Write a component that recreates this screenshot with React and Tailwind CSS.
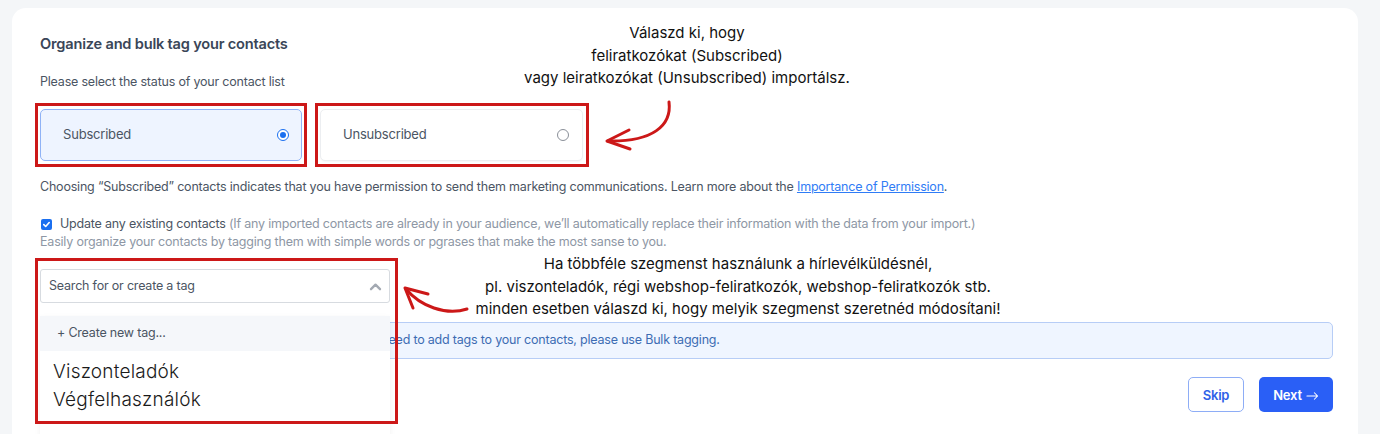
import React from "react";

const ui = { fontFamily: "Inter, 'Noto Sans', sans-serif" };

function Radio({ checked }) {
  if (checked) {
    return (
      <span className="flex h-[12px] w-[12px] items-center justify-center rounded-full border-[1.5px] border-[#1a6ff0] bg-white">
        <span className="h-[6px] w-[6px] rounded-full bg-[#1a6ff0]" />
      </span>
    );
  }
  return <span className="h-[12px] w-[12px] rounded-full border border-[#8a8f98] bg-white" />;
}

export default function App() {
  return (
    <div className="relative h-[434px] w-[1380px] overflow-hidden bg-[#f4f6f8]" style={ui}>
      <div className="ml-3 mt-2 h-[480px] w-[1346px] rounded-t-[14px] bg-white pl-7 pr-[25px] pt-[26px] tracking-[-0.2px]">
        <h1 className="text-[14.6px] font-semibold leading-5 text-[#3a4658]">Organize and bulk tag your contacts</h1>
        <p className="mt-[19px] text-[12.5px] leading-[18px] text-[#4b5563]">Please select the status of your contact list</p>

        <div className="mt-[18px] flex gap-[18px]">
          <div className="flex h-[52px] w-[262px] items-center justify-between rounded-[5px] border border-[#8fb2f6] bg-[#eef4ff] pl-[22px] pr-[12px]">
            <span className="text-[13px] text-[#4b5563]">Subscribed</span>
            <Radio checked />
          </div>
          <div className="flex h-[52px] w-[263px] items-center justify-between rounded-[5px] border border-[#eceef1] bg-white pl-[22px] pr-[13px] shadow-[0_1px_2px_rgba(0,0,0,0.04)]">
            <span className="text-[13px] text-[#4b5563]">Unsubscribed</span>
            <Radio />
          </div>
        </div>

        <p className="mt-[17px] text-[12.5px] leading-[18px] text-[#4b5563]">
          Choosing “Subscribed” contacts indicates that you have permission to send them marketing communications. Learn more about the{" "}
          <span className="text-[#2f7cf6] underline">Importance of Permission</span>.
        </p>

        <div className="mt-[19px] flex items-center gap-[8px] text-[12.5px] leading-[18px]">
          <span className="ml-[1px] flex h-[11px] w-[11px] items-center justify-center rounded-[2px] bg-[#1a6ff0]">
            <svg viewBox="0 0 10 10" className="h-[9px] w-[9px]" fill="none" stroke="white" strokeWidth="1.8" strokeLinecap="round" strokeLinejoin="round">
              <path d="M2 5.2 L4.1 7.2 L8 2.8" />
            </svg>
          </span>
          <span className="text-[#4b5563]">
            Update any existing contacts{" "}
            <span className="text-[#8e97a5]">(If any imported contacts are already in your audience, we’ll automatically replace their information with the data from your import.)</span>
          </span>
        </div>
        <p className="text-[12.5px] leading-[18px] text-[#8e97a5]">Easily organize your contacts by tagging them with simple words or pgrases that make the most sanse to you.</p>

        <div className="relative mt-[18px] w-[350px]">
          <div className="flex h-[34px] items-center justify-between rounded-[3px] border border-[#d7dbe0] bg-white pl-[8px] pr-[7px]">
            <span className="text-[12.5px] text-[#4b5563]">Search for or create a tag</span>
            <svg viewBox="0 0 14 10" className="h-[9px] w-[13px]" fill="none" stroke="#a3a9b2" strokeWidth="2.6" strokeLinecap="round" strokeLinejoin="round">
              <path d="M2 8 L7 3 L12 8" />
            </svg>
          </div>
          <div className="absolute left-0 top-[47px] z-10 h-[140px] w-[350px] bg-white shadow-[0_2px_6px_rgba(0,0,0,0.06)]">
            <div className="flex h-[35px] items-center bg-[#f5f7fa] pl-[17px] text-[12.5px] text-[#4b5563]">+ Create new tag...</div>
            <div className="pl-[13px] pt-[7px] text-[19px] font-light leading-[28px] tracking-[0.2px] text-[#1a1a1a]">
              <div>Viszonteladók</div>
              <div>Végfelhasználók</div>
            </div>
          </div>
        </div>

        <div className="mt-[19px] flex h-[37px] items-center rounded-[5px] border border-[#b7cdf6] bg-[#eff5ff] pl-[305px] text-[12.5px] text-[#3d6cb3]">
          If you need to add tags to your contacts, please use Bulk tagging.
        </div>

        <div className="mt-[18px] flex justify-end gap-[15px]">
          <button className="flex h-[35px] w-[56px] items-center justify-center rounded-[5px] border-[1.5px] border-[#8eadf6] bg-white pt-[2px] text-[13px] font-semibold text-[#2f62e8]">Skip</button>
          <button className="flex h-[35px] w-[74px] items-center justify-center gap-[4px] rounded-[5px] bg-[#2a5ff6] pt-[2px] text-[13px] font-semibold text-white">
            Next
            <svg viewBox="0 0 14 10" className="h-[10px] w-[13px]" fill="none" stroke="white" strokeWidth="1.1" strokeLinecap="round" strokeLinejoin="round">
              <path d="M1 5 H12.5 M9 1.5 L12.5 5 L9 8.5" />
            </svg>
          </button>
        </div>
      </div>

      {/* annotation overlays */}
      <div className="pointer-events-none absolute left-[35px] top-[103px] h-[64px] w-[272px] border-[3px] border-[#cc1818]" />
      <div className="pointer-events-none absolute left-[315px] top-[103px] h-[64px] w-[274px] border-[3px] border-[#cc1818]" />
      <div className="pointer-events-none absolute left-[35px] top-[258px] z-20 h-[166px] w-[363px] border-[3px] border-[#cc1818]" />

      <div className="pointer-events-none absolute left-[487px] top-[22px] w-[400px] text-center text-[15px] leading-[22.5px] text-[#111]">
        <div>Válaszd ki, hogy</div>
        <div>feliratkozókat (Subscribed)</div>
        <div>vagy leiratkozókat (Unsubscribed) importálsz.</div>
      </div>
      <div className="pointer-events-none absolute left-[438px] top-[253px] w-[600px] text-center text-[15px] leading-[22.5px] text-[#111]">
        <div>Ha többféle szegmenst használunk a hírlevélküldésnél,</div>
        <div>pl. viszonteladók, régi webshop-feliratkozók, webshop-feliratkozók stb.</div>
        <div>minden esetben válaszd ki, hogy melyik szegmenst szeretnéd módosítani!</div>
      </div>

      <svg className="pointer-events-none absolute left-0 top-0 z-30" width="1380" height="434" fill="none" stroke="#cc1818" strokeWidth="3" strokeLinecap="round" strokeLinejoin="round">
        <path d="M669 102 C672 126 652 142 608 141" />
        <path d="M629 130 L607 141 L630 149" />
        <path d="M467 309 C446 316 420 306 406 289" />
        <path d="M428 294 L405 288 L413 308" />
      </svg>
    </div>
  );
}
